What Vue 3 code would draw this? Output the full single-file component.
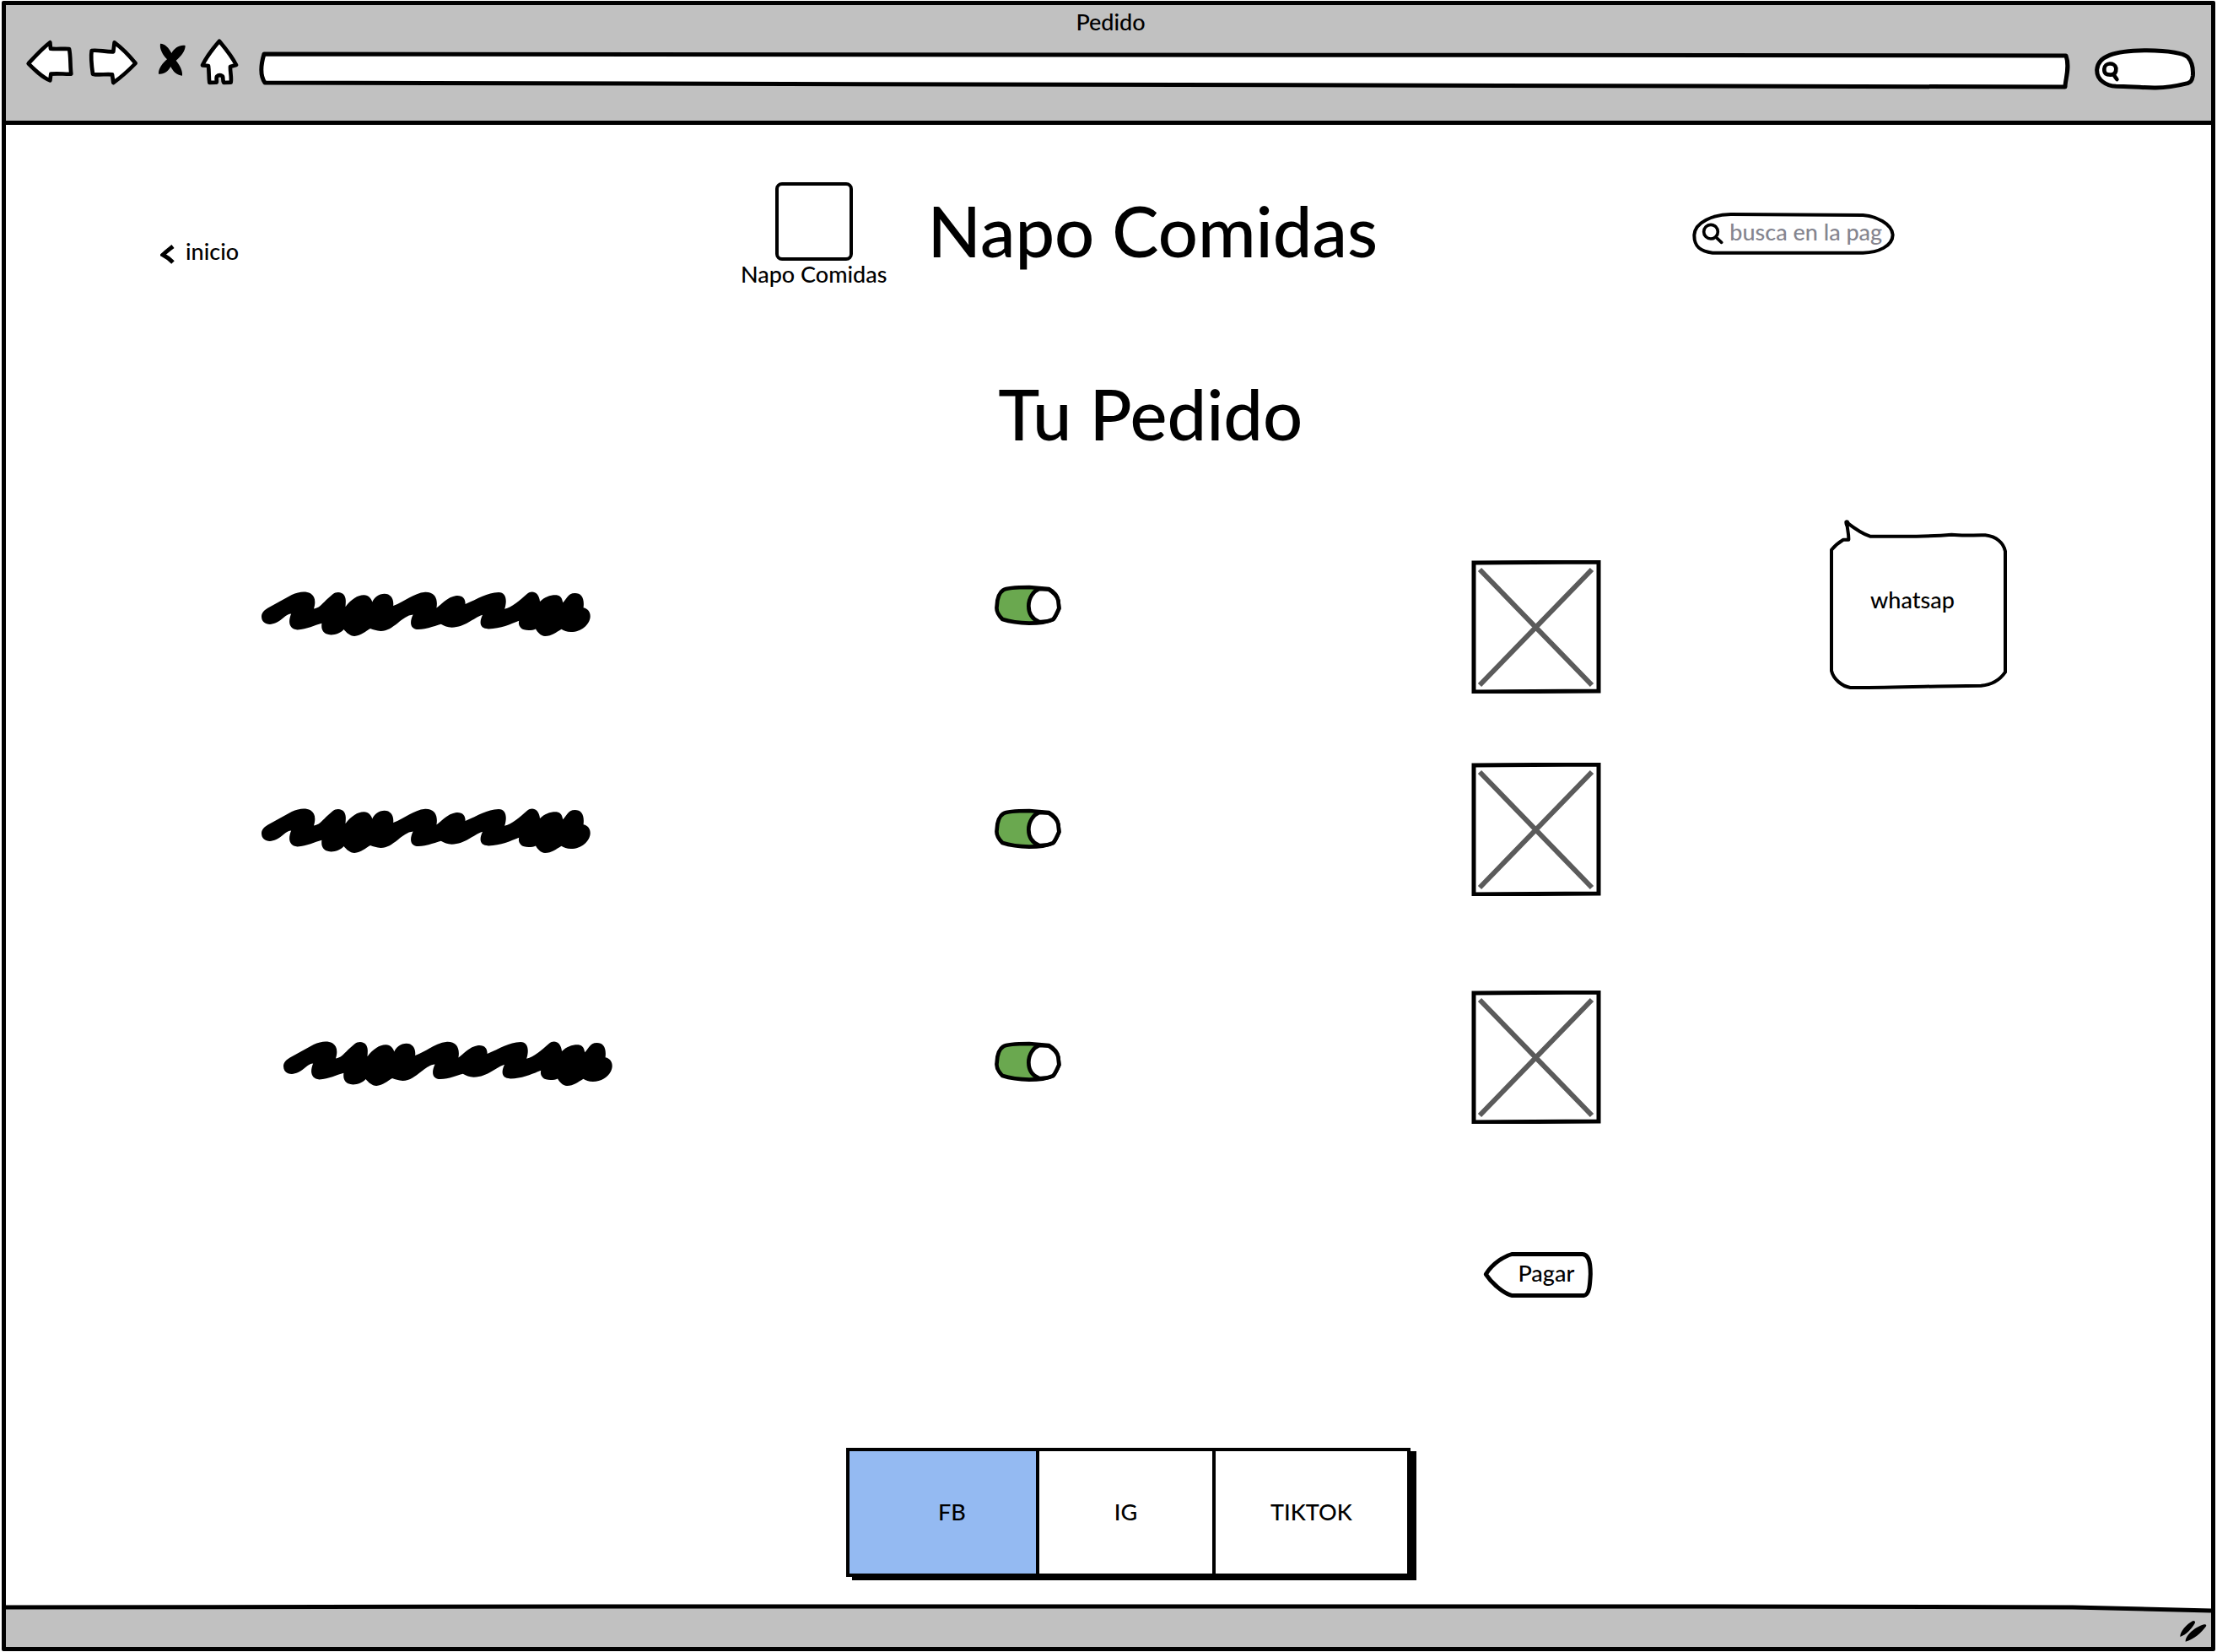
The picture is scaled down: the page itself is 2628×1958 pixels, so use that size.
<script setup>
import { ref } from 'vue'

const items = ref([
  { id: 1, on: true },
  { id: 2, on: true },
  { id: 3, on: true },
])
const networks = ['FB', 'IG', 'TIKTOK']
const active = ref('FB')
const address = ref('')
</script>

<template>
  <div class="window">
    <header class="chrome">
      <div class="chrome-title">Pedido</div>
      <div class="toolbar">
        <nav class="tools" aria-label="Navegador">
          <button type="button" aria-label="Atrás">
            <svg class="outline" width="58" height="56" viewBox="90 138 174 168">
              <path d="M101 226C125 200 150 172 178 151L180 173C200 176 225 172 246 174C252 200 249 235 253 263C230 264 205 260 181 263L178 286C150 275 125 250 101 226Z" />
            </svg>
          </button>
          <button type="button" aria-label="Adelante">
            <svg class="outline" width="60" height="56" viewBox="312 138 180 168">
              <path d="M326 180C345 176 375 185 403 184L407 151C435 172 460 198 482 225C458 250 430 275 403 294L399 265C375 262 350 269 330 263C326 235 322 205 326 180Z" />
            </svg>
          </button>
          <button type="button" aria-label="Detener">
            <svg width="41" height="56" viewBox="540 138 123 168">
              <path d="M570 155C588 156 600 170 610 189C620 170 640 158 659 162C659 182 645 199 626 215C640 232 650 252 648 269C628 268 615 253 607 237C598 254 584 265 564 263C563 243 578 225 594 211C578 193 567 175 570 155Z" />
            </svg>
          </button>
          <button type="button" aria-label="Inicio del navegador">
            <svg class="outline" width="47" height="56" viewBox="711 138 141 168">
              <path d="M780 146C800 170 825 200 840 231L819 237C818 255 824 275 821 293L796 294C790 285 796 272 790 270C783 266 775 268 771 272C768 280 772 288 770 293L745 294C742 275 744 255 741 234L720 232C735 200 755 175 780 146Z" />
            </svg>
          </button>
        </nav>
        <div class="address">
          <svg class="backdrop" viewBox="0 0 2147 46" preserveAspectRatio="none">
            <path d="M7 4C4 14 1 28 8 38L2141 43C2141 34 2147 20 2142 6Z" />
          </svg>
          <input v-model="address" type="text" aria-label="Dirección" />
        </div>
        <div class="chrome-search">
          <svg class="backdrop" viewBox="306 168 363 153">
            <path stroke-width="15" d="M385 307C350 305 316 285 317 248C320 200 375 180 495 179C560 180 620 185 640 203C655 220 660 245 658 270C655 290 648 293 640 296C600 306 560 313 520 312C470 311 430 308 385 307Z" />
            <path stroke-width="14" d="M343 245C344 222 380 220 385 242C386 258 380 265 368 266C350 267 342 262 343 245ZM376 265L388 282" />
          </svg>
          <input type="search" aria-label="Buscar en la web" />
        </div>
      </div>
    </header>

    <main class="page">
      <div class="masthead">
        <a class="back" href="#inicio">
          <svg width="18" height="24" viewBox="0 0 18 24"><path d="M15 3C10 7 6 10 3 13C7 15 11 18 15 22" /></svg>
          <span>inicio</span>
        </a>
        <figure class="brand">
          <div class="brand-box"></div>
          <figcaption>Napo Comidas</figcaption>
        </figure>
        <h1>Napo Comidas</h1>
        <div class="search">
          <svg class="backdrop" viewBox="75 63 726 156">
            <path stroke-width="12" d="M85 145C88 100 150 73 215 72L685 75C730 78 788 105 791 145C790 185 740 208 685 209L150 209C110 205 84 190 85 145Z" />
            <circle cx="144" cy="134" r="25" stroke-width="11" />
            <path stroke-width="11" d="M163 154L182 172" />
          </svg>
          <input type="text" placeholder="busca en la pag" aria-label="busca en la pagina" />
        </div>
      </div>

      <div class="subtitle"><h2>Tu Pedido</h2></div>

      <section class="order">
        <ul class="items">
          <li v-for="item in items" :key="item.id">
            <svg class="scribble" width="390" height="53" viewBox="33 62 1164 160" preserveAspectRatio="none" role="img" aria-label="Producto">
              <path d="M33 152C33 138 44 128 56 121L140 74C165 62 190 60 206 69C222 79 226 98 218 124C236 121 244 110 262 92L285 72C298 61 318 64 326 76C333 88 331 100 330 117C350 90 375 74 396 75C412 76 420 86 425 100C430 84 448 70 468 70C490 70 502 88 499 113C540 98 570 68 612 64C646 63 658 88 652 121C670 108 690 82 722 77C746 75 755 90 754 107C800 88 830 66 872 65C898 66 903 92 893 125C920 118 945 95 973 70C990 56 1015 64 1018 98C1035 82 1055 74 1077 75C1092 77 1097 88 1099 102C1112 92 1115 68 1142 68C1165 68 1176 85 1172 120C1190 124 1197 138 1196 153C1194 180 1165 207 1128 207C1112 206 1103 202 1094 197C1075 208 1060 222 1036 222C1020 220 1010 208 1003 196C990 203 960 204 950 192C943 184 942 176 944 167C915 178 880 196 836 196C805 195 802 175 815 146C780 158 755 190 706 191C690 190 680 186 668 179C645 185 620 197 588 198C560 197 555 175 569 145C530 148 500 204 455 204C440 203 428 199 418 195C400 205 385 221 362 222C345 221 334 210 324 198C310 215 280 222 262 214C248 206 244 195 246 176C220 182 195 198 160 199C130 197 126 170 138 142C120 142 105 165 85 174C60 186 33 178 33 152Z" />
            </svg>
            <label class="switch">
              <input v-model="item.on" type="checkbox" aria-label="Incluir producto" />
              <svg class="outline" width="80" height="48" viewBox="54 69 240 144">
                <path :class="{ lit: item.on }" d="M88 88C100 80 150 78 180 78L250 84C270 95 280 110 283 125L286 153C278 172 272 185 265 192C240 203 210 206 180 206C140 205 110 200 85 192C68 175 62 160 65 145C66 120 72 98 88 88Z" />
                <path d="M215 84L250 86C268 97 280 110 283 125L286 153C278 172 272 185 265 192C250 199 233 202 215 201C195 193 178 175 178 145C178 115 195 92 215 84Z" />
              </svg>
            </label>
            <svg class="picture" width="154" height="158" viewBox="0 0 154 158" role="img" aria-label="Imagen del producto">
              <path class="cross" d="M10 11L143 148M143 11L10 148" />
              <path class="edge" d="M3 3L151 2L151 155L3 156Z" />
            </svg>
          </li>
        </ul>
        <aside class="bubble">
          <svg class="backdrop" viewBox="84 45 636 609">
            <path stroke-width="12" d="M93 155C105 140 120 128 135 119L154 119C155 95 148 80 148 58C170 75 200 97 230 107C300 106 400 112 520 101C560 106 600 102 640 103C680 108 705 130 711 160L711 590C690 620 665 635 625 638C500 638 300 646 160 645C130 640 100 615 93 585Z" />
            <path stroke-width="18" d="M148 58L149 64" />
          </svg>
          <span>whatsap</span>
        </aside>
      </section>

      <div class="checkout">
        <button class="pay" type="button">
          <svg class="backdrop" viewBox="51 69 394 168">
            <path stroke-width="15" d="M61 151C85 110 130 85 155 79L405 79C425 80 434 100 434 150C432 190 430 225 410 227L155 227C120 218 80 180 61 151Z" />
          </svg>
          <span>Pagar</span>
        </button>
      </div>

      <div class="social">
        <div class="tabs">
          <button
            v-for="name in networks"
            :key="name"
            type="button"
            :class="{ active: name === active }"
            @click="active = name"
          >{{ name }}</button>
        </div>
      </div>
    </main>

    <footer class="status">
      <svg class="slope" viewBox="0 0 2614 49" preserveAspectRatio="none">
        <path class="fill" d="M0 2L700 1L2000 1L2450 2L2614 6L2614 49L0 49Z" />
        <path class="line" d="M0 2L700 1L2000 1L2450 2L2614 6" />
      </svg>
      <svg class="grip" width="34" height="28" viewBox="312 118 102 84">
        <path d="M316 178C315 160 338 133 362 121C368 121 371 124 368 130C355 152 338 170 316 178ZM335 195C335 172 370 142 402 134C408 133 411 137 407 142C392 162 365 188 335 195Z" />
      </svg>
    </footer>
  </div>
</template>

<style>
body {
  margin: 0;
  background: #fff;
}
</style>

<style scoped>
.window {
  display: flex;
  flex-direction: column;
  box-sizing: border-box;
  min-height: calc(100vh - 3px);
  margin: 1px 2px 2px;
  border: 5px solid #000;
  border-radius: 2px;
  background: #fff;
  color: #000;
  font-family: Lato, "Noto Sans", sans-serif;
  font-size: 27px;
  font-weight: 500;
  line-height: 32px;
}

svg {
  display: block;
}

button,
input {
  margin: 0;
  padding: 0;
  border: 0;
  background: none;
  color: inherit;
  font: inherit;
}

button {
  cursor: pointer;
}

.outline path,
.backdrop path,
.backdrop circle {
  fill: #fff;
  stroke: #000;
  stroke-linecap: round;
  stroke-linejoin: round;
}

.outline path {
  stroke-width: 14px;
}

.backdrop {
  position: absolute;
  inset: 0;
  width: 100%;
  height: 100%;
}

/* browser bar */
.chrome {
  padding: 4px 18px 36px 23px;
  border-bottom: 5px solid #000;
  background: #c1c1c1;
}

.chrome-title {
  text-align: center;
}

.toolbar {
  display: flex;
  align-items: flex-start;
  margin-top: 4px;
}

.tools {
  display: flex;
  gap: 16px;
  margin-right: 22px;
}

.address {
  position: relative;
  flex: 1;
  height: 46px;
  margin-top: 14px;
}

.address .backdrop path {
  stroke-width: 5px;
  vector-effect: non-scaling-stroke;
}

.address input,
.chrome-search input {
  position: relative;
  box-sizing: border-box;
  width: 100%;
  height: 100%;
  padding: 0 16px;
  outline: 0;
}

.chrome-search {
  position: relative;
  width: 121px;
  height: 51px;
  margin: 10px 0 0 28px;
}

.chrome-search input {
  padding-left: 34px;
}

/* page */
.page {
  flex: 1;
  padding-bottom: 34px;
}

.masthead {
  display: grid;
  grid-template-columns: 688fr 222fr 906fr 616fr;
  align-items: start;
  padding: 68px 0 0 7%;
}

.back {
  display: flex;
  align-items: center;
  gap: 12px;
  margin-top: 66px;
  color: inherit;
  text-decoration: none;
}

.back svg {
  margin-top: 6px;
}

.back path {
  fill: none;
  stroke: #000;
  stroke-width: 5px;
}

.brand {
  display: flex;
  flex-direction: column;
  align-items: center;
  width: 174px;
  margin: 0;
  white-space: nowrap;
}

.brand-box {
  box-sizing: border-box;
  width: 92px;
  height: 93px;
  border: 4px solid #000;
  border-radius: 8px;
}

h1,
h2 {
  margin: 0;
  font-size: 83px;
  font-weight: 500;
  line-height: 98px;
  white-space: nowrap;
}

h1 {
  margin-top: 8px;
}

.search {
  position: relative;
  width: 242px;
  height: 52px;
  margin-top: 35px;
}

.search input {
  position: relative;
  box-sizing: border-box;
  width: 100%;
  height: 100%;
  padding: 0 6px 6px 45px;
  outline: 0;
}

.search input::placeholder {
  color: #85858f;
  opacity: 1;
}

.subtitle {
  padding: 100px 0 0 45%;
}

.order {
  display: grid;
  grid-template-columns: 2161fr 453fr;
  align-items: start;
  margin-top: 76px;
}

.items {
  display: grid;
  gap: 82px;
  margin: 49px 0 0;
  padding: 0;
  list-style: none;
}

.items li {
  display: grid;
  grid-template-columns: 868fr 565fr 424fr;
  align-items: start;
  padding-left: 14%;
}

.scribble {
  margin-top: 37px;
}

.switch {
  position: relative;
  width: 80px;
  margin-top: 29px;
}

.items li:nth-child(2) .scribble,
.items li:nth-child(2) .switch {
  margin-top: 54px;
}

.items li:nth-child(3) {
  padding-top: 30px;
}

.items li:nth-child(3) .scribble,
.items li:nth-child(3) .switch {
  margin-top: 60px;
}

.items li:nth-child(3) .scribble {
  margin-left: 26px;
}

.switch input {
  position: absolute;
  inset: 0;
  width: 100%;
  height: 100%;
  opacity: 0;
}

.switch .lit {
  fill: #6aa84f;
}

.picture path {
  fill: none;
}

.picture .cross {
  stroke: #5b5b5b;
  stroke-width: 6px;
}

.picture .edge {
  stroke: #000;
  stroke-width: 5px;
}

.bubble {
  position: relative;
  box-sizing: border-box;
  width: 212px;
  height: 203px;
  padding-top: 80px;
  padding-right: 14px;
  text-align: center;
}

.bubble span {
  position: relative;
}

.checkout {
  padding: 151px 0 0 67%;
}

.pay {
  position: relative;
  width: 131px;
  height: 56px;
  padding: 0 0 4px 18px;
}

.pay span {
  position: relative;
}

.social {
  margin-top: 177px;
  padding-left: 38.1%;
}

.tabs {
  display: grid;
  grid-template-columns: 221px 209px 1fr;
  box-sizing: border-box;
  width: 669px;
  border: 4px solid #000;
  box-shadow: 7px 4px 0 #000;
  background: #fff;
}

.tabs button {
  height: 145px;
  padding-bottom: 2px;
}

.tabs button + button {
  border-left: 4px solid #000;
}

.tabs .active {
  padding-left: 22px;
  background: #94baf2;
}

/* status bar */
.status {
  position: relative;
  display: flex;
  align-items: flex-end;
  justify-content: flex-end;
  height: 49px;
  padding-right: 4px;
}

.slope {
  position: absolute;
  inset: 0;
  width: 100%;
  height: 100%;
  overflow: visible;
}

.slope .fill {
  fill: #c1c1c1;
}

.slope .line {
  fill: none;
  stroke: #000;
  stroke-width: 5px;
  vector-effect: non-scaling-stroke;
}

.grip {
  position: relative;
  margin-bottom: 4px;
}
</style>
